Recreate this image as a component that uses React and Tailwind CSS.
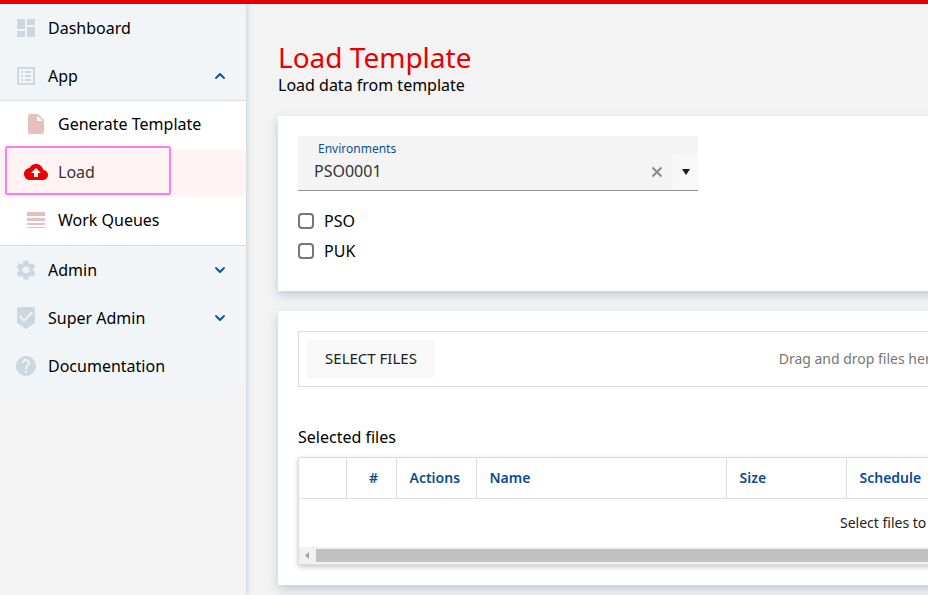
import {
  MdBeenhere,
  MdDashboard,
  MdHelp,
  MdInsertDriveFile,
  MdListAlt,
  MdSettings,
} from "react-icons/md";
import { ChevronDown, ChevronUp } from "lucide-react";

const CloudIcon = ({ className }) => (
  <svg className={className} viewBox="0 0 24 24" fill="currentColor">
    <path
      fillRule="evenodd"
      d="M19.35 10.04C18.67 6.59 15.64 4 12 4 9.11 4 6.6 5.64 5.35 8.04 2.34 8.36 0 10.91 0 14c0 3.31 2.69 6 6 6h13c2.76 0 5-2.24 5-5 0-2.64-2.05-4.78-4.65-4.96zM14 13v4h-4v-4H7l5-5 5 5h-3z"
    />
  </svg>
);

const QueueIcon = ({ className }) => (
  <svg className={className} viewBox="0 0 24 24" fill="currentColor">
    <path d="M3 4h18v4H3zM3 10h18v3H3zM3 15h18v2H3zM3 19h18v1H3z" />
  </svg>
);

const NavItem = ({ icon: Icon, label, chevron: Chevron }) => (
  <a href="#" className="flex h-12 items-center gap-[10px] pr-[18px] pb-px pl-[14px]">
    <Icon className="size-6 text-[#cdd7df]" />
    <span className="flex-1">{label}</span>
    {Chevron && <Chevron className="size-4 text-[#0f59a6]" strokeWidth={3} />}
  </a>
);

const SubItem = ({ icon: Icon, label, active }) => (
  <a
    href="#"
    className={
      active
        ? "relative flex h-12 items-center gap-[10px] bg-[#fff3f3] pb-0.5 pl-6 text-[#333333]"
        : "flex h-12 items-center gap-[10px] pb-0.5 pl-6"
    }
  >
    <Icon
      className={active ? "size-6 text-[#e60000]" : "size-6 text-[#e8bfbf]"}
    />
    <span>{label}</span>
    {active && (
      <span className="absolute -top-[3px] left-[5px] h-[49px] w-[166px] rounded-xs border-2 border-[#ff7cf5]" />
    )}
  </a>
);

const Sidebar = () => (
  <aside className="relative w-[246px] shrink-0 shadow-[0_0_6px_#b4c0ca]">
    <nav className="bg-[#f1f5f8]">
      <NavItem icon={MdDashboard} label="Dashboard" />
      <NavItem icon={MdListAlt} label="App" chevron={ChevronUp} />
      <div className="border-y border-[#d9dfe3] bg-white">
        <SubItem icon={MdInsertDriveFile} label="Generate Template" />
        <SubItem icon={CloudIcon} label="Load" active />
        <SubItem icon={QueueIcon} label="Work Queues" />
      </div>
      <NavItem icon={MdSettings} label="Admin" chevron={ChevronDown} />
      <NavItem icon={MdBeenhere} label="Super Admin" chevron={ChevronDown} />
      <NavItem icon={MdHelp} label="Documentation" />
    </nav>
  </aside>
);

const Card = ({ children }) => (
  <section className="bg-white p-5 shadow-[0_4px_10px_#bfcad4]">
    {children}
  </section>
);

const Environments = () => (
  <div className="flex h-[55px] w-[400px] border-b border-[#949494] bg-[#f4f4f4]">
    <div className="flex flex-1 flex-col">
      <label
        htmlFor="environment"
        className="pt-[5px] pl-5 text-xs leading-4 text-[#0f4f96]"
      >
        Environments
      </label>
      <input
        id="environment"
        defaultValue="PSO0001"
        className="h-7 w-full pl-4 text-[#333333] outline-none"
      />
    </div>
    <button
      type="button"
      aria-label="Clear"
      className="flex h-9 w-8 items-center justify-center self-end text-[#888888]"
    >
      <svg className="size-3" viewBox="0 0 12 12" stroke="currentColor">
        <path d="M1.500 1.500l9 9M10.500 1.500l-9 9" strokeWidth="2" />
      </svg>
    </button>
    <button
      type="button"
      aria-label="Open list"
      className="flex h-9 w-[25px] items-center justify-center self-end bg-[#f8f8f8]"
    >
      <svg className="size-2" viewBox="0 0 8 8">
        <path d="M0 1h8L4 7z" fill="#1a1a1a" />
      </svg>
    </button>
  </div>
);

const CheckField = ({ id, label }) => (
  <div className="flex h-[30px] items-center gap-[10px]">
    <input
      type="checkbox"
      id={id}
      className="size-4 appearance-none rounded-sm border-2 border-[#767676] bg-white"
    />
    <label htmlFor={id}>{label}</label>
  </div>
);

const FilesTable = () => (
  <div className="border border-[#dddddd] shadow-[0_2px_5px_#c8c8c8]">
    <table className="w-full table-fixed border-collapse text-left">
      <colgroup>
        <col className="w-[47px]" />
        <col className="w-[50px]" />
        <col className="w-20" />
        <col className="w-[250px]" />
        <col className="w-[120px]" />
        <col />
      </colgroup>
      <thead className="text-sm text-[#0b4c93]">
        <tr className="h-10 border-b border-[#dddddd]">
          <th />
          <th className="border-l border-[#dddddd] pl-[5px] text-center font-semibold">
            #
          </th>
          <th className="border-l border-[#dddddd] pl-[13px] font-semibold">
            Actions
          </th>
          <th className="border-l border-[#dddddd] pl-[13px] font-semibold">
            Name
          </th>
          <th className="border-l border-[#dddddd] pl-[13px] font-semibold">
            Size
          </th>
          <th className="border-l border-[#dddddd] pl-[13px] font-semibold">
            Schedule
          </th>
        </tr>
      </thead>
      <tbody>
        <tr className="h-[49px]">
          <td colSpan={6} className="pl-[541px] text-sm text-[#222222]">
            Select files to load
          </td>
        </tr>
      </tbody>
    </table>
    <div className="flex h-[17px] items-center bg-[#f1f1f1]">
      <svg className="w-[17px]" viewBox="0 0 17 17">
        <path d="M10 5v7L6 8.500z" fill="#a3a3a3" />
      </svg>
      <div className="h-[13px] flex-1 bg-[#c1c1c1]" />
    </div>
  </div>
);

const App = () => {
  return (
    <div className="flex h-screen flex-col overflow-hidden bg-[#f3f3f3] font-['Noto_Sans',sans-serif] text-base text-black">
      <header className="relative z-10 h-1 shrink-0 bg-[#e60000]" />
      <div className="flex min-h-0 flex-1">
        <Sidebar />
        <main className="flex-1 overflow-hidden pt-[35px] pl-8">
          <div className="min-w-[752px]">
            <h1 className="text-[28px] leading-9 text-[#e60000]">
              Load Template
            </h1>
            <p className="h-[41px] leading-5">Load data from template</p>
            <div className="flex flex-col gap-5">
              <Card>
                <Environments />
                <div className="pt-[15px] pb-[5px]">
                  <CheckField id="pso" label="PSO" />
                  <CheckField id="puk" label="PUK" />
                </div>
              </Card>
              <Card>
                <div className="flex items-center justify-between border border-[#dddddd] p-2">
                  <button
                    type="button"
                    className="h-[38px] w-32 rounded-sm bg-[#f8f8f8] pb-0.5 text-[15px] text-[#222222]"
                  >
                    SELECT FILES
                  </button>
                  <span className="pr-1 text-sm text-[#777777]">
                    Drag and drop files here to select
                  </span>
                </div>
                <h2 className="pt-10 pb-[10px] leading-5">Selected files</h2>
                <FilesTable />
              </Card>
            </div>
          </div>
        </main>
      </div>
    </div>
  );
};

export default App;
